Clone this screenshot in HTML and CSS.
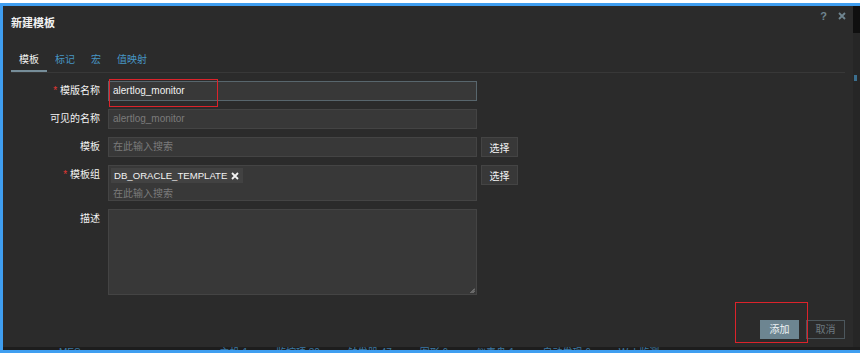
FILE: index.html
```html
<!DOCTYPE html>
<html lang="zh-CN">
<head>
    <meta charset="UTF-8">
    <title>新建模板</title>
    <link rel="stylesheet" href="styles.css">
</head>
<body>
    <div class="screen">
        <div class="main">
            <div class="dialog">
                <div class="dialog-head">
                    <h4 class="dialog-title">新建模板</h4>
                    <div class="dialog-tools">
                        <span class="tool-help">?</span>
                        <svg class="tool-close" width="8" height="8" viewBox="0 0 8 8">
                            <path d="M1 1 L7 7 M7 1 L1 7" stroke="#6f8590" stroke-width="1.8" fill="none"/>
                        </svg>
                    </div>
                </div>

                <ul class="tabs">
                    <li class="tab active">模板</li>
                    <li class="tab">标记</li>
                    <li class="tab">宏</li>
                    <li class="tab">值映射</li>
                </ul>

                <div class="form">
                    <div class="form-row">
                        <label class="form-label"><span class="req">*</span> 模版名称</label>
                        <div class="field focused">alertlog_monitor</div>
                    </div>
                    <div class="form-row">
                        <label class="form-label">可见的名称</label>
                        <div class="field placeholder">alertlog_monitor</div>
                    </div>
                    <div class="form-row">
                        <label class="form-label">模板</label>
                        <div class="field placeholder">在此输入搜索</div>
                        <button class="btn-select">选择</button>
                    </div>
                    <div class="form-row">
                        <label class="form-label"><span class="req">*</span> 模板组</label>
                        <div class="field multi">
                            <span class="tag">DB_ORACLE_TEMPLATE
                                <svg width="8" height="8" viewBox="0 0 8 8">
                                    <path d="M1 1 L7 7 M7 1 L1 7" stroke="#f2f2f2" stroke-width="1.8" fill="none"/>
                                </svg>
                            </span>
                            <div class="multi-search">在此输入搜索</div>
                        </div>
                        <button class="btn-select">选择</button>
                    </div>
                    <div class="form-row">
                        <label class="form-label">描述</label>
                        <div class="field textarea">
                            <svg class="grip" width="5" height="5" viewBox="0 0 5 5">
                                <path d="M0.5 5 L5 0.5 M2.5 5 L5 2.5" stroke="#9a9a9a" stroke-width="1" fill="none"/>
                            </svg>
                        </div>
                    </div>
                </div>

                <div class="dialog-foot">
                    <button class="btn btn-primary">添加</button>
                    <button class="btn btn-alt">取消</button>
                </div>
            </div>

            <div class="side">
                <div class="side-top"></div>
                <div class="side-mark"></div>
            </div>
        </div>

        <div class="under">
            <span class="under-item first">…oooo_co_MES</span>
            <span class="under-item" style="margin-left: 111px">主机 1</span>
            <span class="under-item">监控项 30</span>
            <span class="under-item">触发器 47</span>
            <span class="under-item">图形 6</span>
            <span class="under-item">仪表盘 1</span>
            <span class="under-item">自动发现 6</span>
            <span class="under-item">Web监测</span>
        </div>
    </div>

    <div class="mark mark-name"></div>
    <div class="mark mark-add"></div>
</body>
</html>
```

FILE: styles.css
```css
* {
    box-sizing: border-box;
}

html, body {
    margin: 0;
    padding: 0;
}

body {
    position: relative;
    width: 860px;
    height: 353px;
    overflow: hidden;
    background-color: #ffffff;
    padding-top: 3px;
    font-family: "Liberation Sans", "Noto Sans CJK SC", sans-serif;
}

.screen {
    height: 350px;
    border: 3px solid #3f9ef0;
    border-right: none;
    background-color: #1d1d1d;
    display: flex;
    flex-direction: column;
}

.main {
    display: flex;
    height: 341px;
}

/* 对话框 */
.dialog {
    width: 850px;
    height: 341px;
    background-color: #2b2b2b;
    padding: 0 8px 8px;
    display: flex;
    flex-direction: column;
}

.dialog-head {
    height: 34px;
    display: flex;
    justify-content: space-between;
    align-items: flex-start;
}

.dialog-title {
    margin: 0;
    padding-top: 11px;
    font-size: 11px;
    line-height: 13px;
    font-weight: bold;
    color: #f2f2f2;
}

.dialog-tools {
    display: flex;
    align-items: center;
    gap: 11px;
    padding-top: 4px;
    margin-right: -1px;
    height: 16px;
}

.tool-help {
    font-size: 11px;
    font-weight: bold;
    line-height: 12px;
    color: #6f8590;
}

/* 标签页 */
.tabs {
    list-style: none;
    margin: 12px 0 0;
    padding: 0;
    display: flex;
    border-bottom: 1px solid #383838;
}

.tab {
    padding: 2px 8px 4px;
    font-size: 10px;
    line-height: 12px;
    color: #4796c4;
    border-bottom: 2px solid transparent;
}

.tab.active {
    color: #f2f2f2;
    border-bottom-color: #768d99;
}

/* 表单 */
.form {
    margin-top: 8px;
}

.form-row {
    display: flex;
    align-items: flex-start;
    margin-bottom: 8px;
}

.form-label {
    width: 89px;
    margin-right: 8px;
    text-align: right;
    font-size: 10px;
    line-height: 20px;
    color: #f2f2f2;
}

.req {
    color: #e33734;
}

.field {
    width: 369px;
    height: 20px;
    background-color: #383838;
    border: 1px solid #444444;
    padding: 0 4px;
    font-size: 10px;
    line-height: 18px;
    color: #f2f2f2;
}

.field.focused {
    border-color: #58666d;
}

.field.placeholder {
    color: #7b7b7b;
}

.field.multi {
    height: 36px;
    padding: 2px;
}

.tag {
    display: inline-flex;
    align-items: center;
    gap: 4px;
    height: 15px;
    padding: 0 4px 0 3px;
    background-color: #424242;
    font-size: 9.6px;
    line-height: 15px;
    color: #f2f2f2;
    vertical-align: top;
}

.multi-search {
    margin-top: 2px;
    padding-left: 2px;
    line-height: 12px;
    color: #7b7b7b;
}

.field.textarea {
    position: relative;
    height: 86px;
}

.grip {
    position: absolute;
    right: 1px;
    bottom: 1px;
}

.btn-select {
    margin-left: 4px;
    width: 37px;
    height: 20px;
    padding: 0;
    background-color: #383838;
    border: 1px solid #444444;
    font-family: inherit;
    font-size: 10px;
    color: #f2f2f2;
}

/* 底部按钮 */
.dialog-foot {
    margin-top: auto;
    display: flex;
    justify-content: flex-end;
    gap: 7px;
}

.btn {
    width: 39px;
    height: 19px;
    padding: 0;
    font-family: inherit;
    font-size: 10px;
    line-height: 17px;
}

.btn-primary {
    background-color: #6d8591;
    border: 1px solid #6d8591;
    color: #eef2f4;
}

.btn-alt {
    background-color: transparent;
    border: 1px solid #4c575d;
    color: #6e7a80;
}

/* 背景页面 */
.side {
    flex: 1;
    background-color: #262626;
}

.side-top {
    height: 27px;
    background-color: #0f0f0f;
}

.side-mark {
    margin: 42px 0 0 1px;
    width: 3px;
    height: 6px;
    background-color: #3b6f8f;
}

.under {
    height: 3px;
    overflow: hidden;
    background-color: #1d1d1d;
    display: flex;
    padding-left: 2px;
}

.under-item {
    font-size: 10px;
    line-height: 11px;
    color: #3a78a3;
    margin-right: 28px;
    white-space: nowrap;
}

/* 标注框 */
.mark {
    position: absolute;
    border: 1px solid #dc232b;
    pointer-events: none;
}

.mark-name {
    left: 109px;
    top: 79px;
    width: 109px;
    height: 28px;
}

.mark-add {
    left: 735px;
    top: 302px;
    width: 73px;
    height: 41px;
}
```
